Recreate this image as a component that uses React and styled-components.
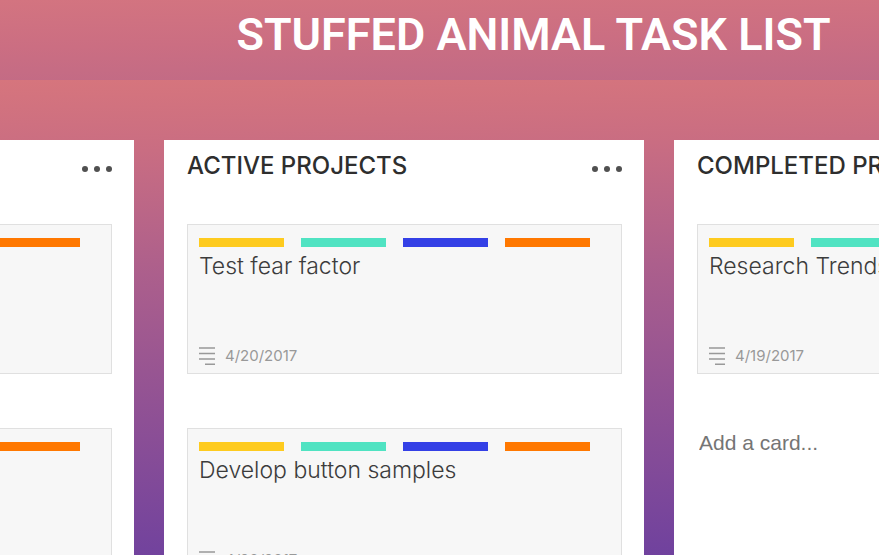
import React, { useLayoutEffect, useRef } from "react";
import styled, { createGlobalStyle } from "styled-components";

const GlobalStyle = createGlobalStyle`
  * { box-sizing: border-box; }
  body { margin: 0; font-family: Inter, "Open Sans", sans-serif; }
`;

const Page = styled.div`
  display: flex;
  flex-direction: column;
  height: 100vh;
  overflow: hidden;
`;

const Header = styled.header`
  display: flex;
  justify-content: center;
  align-items: center;
  flex: none;
  height: 80px;
  padding: 0 0 10px 188px;
  background: linear-gradient(179deg, #d37480 0%, #cb6e82 50%, #c06a86 100%);
`;

const PageTitle = styled.h1`
  margin: 0;
  color: #fff;
  font-family: Roboto, sans-serif;
  font-size: 45px;
  font-weight: 600;
  line-height: 68px;
  white-space: nowrap;
`;

const Board = styled.main`
  display: flex;
  flex: 1;
  gap: 30px;
  min-height: 0;
  padding: 60px 30px 0;
  overflow: auto;
  scrollbar-width: none;
  background: linear-gradient(179deg, #d6757d 0%, #c96d82 15%, #ac5f8c 40%, #6f419e 100%);
`;

const Column = styled.section`
  flex: 0 0 480px;
  padding: 0 22px 40px 23px;
  background: #fff;
`;

const ColumnHeader = styled.header`
  display: flex;
  align-items: center;
  justify-content: space-between;
  height: 52px;
  margin-bottom: 32px;
`;

const ColumnTitle = styled.h2`
  margin: 0;
  color: #2e2e2e;
  font-size: 24px;
  font-weight: 500;
  line-height: 28px;
  white-space: nowrap;
`;

const MenuButton = styled.button`
  display: flex;
  gap: 6px;
  padding: 10px 0 4px;
  border: 0;
  background: none;
  cursor: pointer;
`;

const Dot = styled.span`
  width: 6px;
  height: 6px;
  border-radius: 50%;
  background: #505050;
`;

const Card = styled.article`
  display: flex;
  flex-direction: column;
  min-height: 150px;
  margin-bottom: 54px;
  padding: 13px 11px 6px;
  border: 1px solid #e0e0e0;
  background: #f7f7f7;
`;

const Labels = styled.div`
  display: flex;
  gap: 17px;
`;

const Label = styled.span`
  width: 85px;
  height: 9px;
  background: ${(p) => p.$color};
`;

const CardTitle = styled.h3`
  margin: 4px 0 0;
  color: #3c3c3c;
  font-size: 23px;
  font-weight: 300;
  line-height: 30px;
`;

const CardFooter = styled.footer`
  display: flex;
  align-items: center;
  gap: 10px;
  margin-top: auto;
  color: #999;
  font-size: 15px;
  line-height: 22px;
`;

const AddCard = styled.input`
  width: 100%;
  padding: 0 1px;
  border: 1px solid transparent;
  background: transparent;
  color: #444;
  font-family: "Liberation Sans", Arial, sans-serif;
  font-size: 21px;
  line-height: 28px;
  &::placeholder { color: #757575; opacity: 1; }
`;

const LABEL_COLORS = ["#fecb1f", "#50e3c2", "#3440e6", "#ff7800"];

const COLUMNS = [
  {
    title: "PROPOSED",
    cards: [
      { title: "Sketch new designs", date: "4/18/2017" },
      { title: "Compare fabrics", date: "4/21/2017" },
    ],
  },
  {
    title: "ACTIVE PROJECTS",
    cards: [
      { title: "Test fear factor", date: "4/20/2017" },
      { title: "Develop button samples", date: "4/20/2017" },
    ],
  },
  {
    title: "COMPLETED PROJECTS",
    cards: [{ title: "Research Trends", date: "4/19/2017" }],
  },
];

function NotesIcon() {
  return (
    <svg width="16" height="18" viewBox="0 0 16 18" fill="none" stroke="#999" strokeWidth="1.5" aria-hidden="true">
      <path d="M0 .9h16M0 6.4h16M0 11.9h16M6 17.2h10" />
    </svg>
  );
}

function TaskCard({ title, date }) {
  return (
    <Card>
      <Labels>
        {LABEL_COLORS.map((color) => (
          <Label key={color} $color={color} />
        ))}
      </Labels>
      <CardTitle>{title}</CardTitle>
      <CardFooter>
        <NotesIcon />
        <time>{date}</time>
      </CardFooter>
    </Card>
  );
}

export default function App() {
  const board = useRef(null);

  // Open with the active column in view.
  useLayoutEffect(() => {
    board.current.scrollLeft = 376;
  }, []);

  return (
    <Page>
      <GlobalStyle />
      <Header>
        <PageTitle>STUFFED ANIMAL TASK LIST</PageTitle>
      </Header>
      <Board ref={board}>
        {COLUMNS.map((column) => (
          <Column key={column.title}>
            <ColumnHeader>
              <ColumnTitle>{column.title}</ColumnTitle>
              <MenuButton type="button" aria-label={`${column.title} menu`}>
                <Dot />
                <Dot />
                <Dot />
              </MenuButton>
            </ColumnHeader>
            {column.cards.map((card) => (
              <TaskCard key={card.title} {...card} />
            ))}
            <AddCard type="text" placeholder="Add a card..." aria-label={`Add a card to ${column.title}`} />
          </Column>
        ))}
      </Board>
    </Page>
  );
}
